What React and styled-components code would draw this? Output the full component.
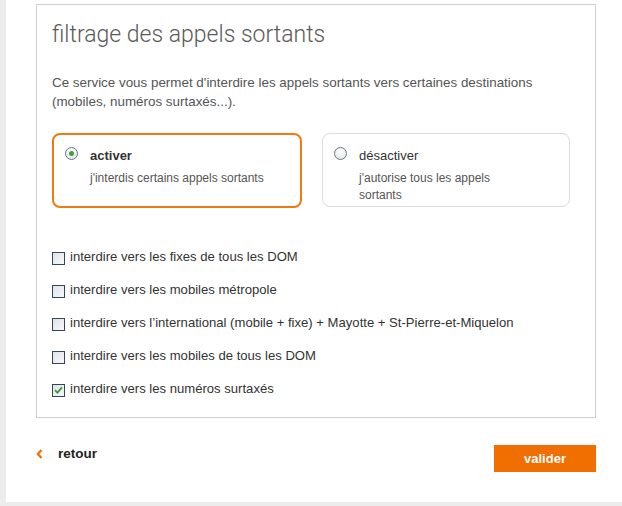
import React, { useState } from "react";
import styled, { createGlobalStyle } from "styled-components";

const GlobalStyle = createGlobalStyle`
  html, body {
    margin: 0;
    padding: 0;
    background: #ececec;
    font-family: "Liberation Sans", Arial, sans-serif;
  }
`;

const Panel = styled.div`
  margin-left: 6px;
  background: #fff;
  height: 502px;
  padding: 4px 26px 0 30px;
  box-sizing: border-box;
`;

const Box = styled.div`
  border: 1px solid #cfcfcf;
  height: 414px;
  box-sizing: border-box;
  padding: 14px 15px 0 15px;
`;

const Title = styled.h1`
  margin: 0;
  font-family: Roboto, "Liberation Sans", sans-serif;
  font-weight: 300;
  font-size: 23px;
  line-height: 32px;
  color: #5a5a5a;
`;

const Intro = styled.p`
  margin: 22px 0 0;
  font-size: 13.4px;
  line-height: 19px;
  color: #555;
`;

const Choices = styled.div`
  display: flex;
  gap: 20px;
  margin-top: 22px;
`;

const Card = styled.label`
  box-sizing: border-box;
  width: ${(p) => p.$w}px;
  height: ${(p) => (p.$on ? 75 : 74)}px;
  border: ${(p) => (p.$on ? "2px solid #ee7a12" : "1px solid #dcdcdc")};
  border-radius: 8px;
  padding: ${(p) => (p.$on ? "11px 0 0 11px" : "12px 0 0 11px")};
  display: flex;
  gap: 12px;
  cursor: pointer;
`;

const Radio = styled.span`
  flex: none;
  width: 11px;
  height: 11px;
  margin-top: 1px;
  border-radius: 50%;
  border: 1px solid #6d7784;
  background: radial-gradient(circle at 50% 35%, #fff 0%, #e6ebf0 70%, #cfd6de 100%);
  position: relative;
  &::after {
    content: "";
    display: ${(p) => (p.$on ? "block" : "none")};
    position: absolute;
    left: 3px;
    top: 3px;
    width: 5px;
    height: 5px;
    border-radius: 50%;
    background: #3fa23a;
  }
`;

const CardText = styled.div`
  display: flex;
  flex-direction: column;
  padding-top: 2px;
`;

const CardTitle = styled.span`
  font-size: 13px;
  line-height: 16px;
  font-weight: ${(p) => (p.$on ? "bold" : "normal")};
  color: #333;
`;

const CardSub = styled.span`
  margin-top: 6px;
  font-size: 12px;
  line-height: 17px;
  color: #555;
  max-width: ${(p) => p.$max || "none"};
`;

const Options = styled.div`
  display: flex;
  flex-direction: column;
  gap: 16px;
  margin-top: 40px;
`;

const Option = styled.label`
  display: flex;
  align-items: center;
  gap: 5px;
  height: 17px;
  font-size: 13.1px;
  color: #333;
  cursor: pointer;
`;

const Check = styled.span`
  flex: none;
  width: 11px;
  height: 11px;
  border: 1px solid #34465a;
  background: linear-gradient(135deg, #dfe3e8 0%, #f7f8fa 100%);
  display: flex;
  align-items: center;
  justify-content: center;
  margin-top: 3px;
`;

const Footer = styled.div`
  display: flex;
  justify-content: space-between;
  align-items: flex-start;
  margin-top: 27px;
`;

const Back = styled.a`
  display: flex;
  align-items: center;
  gap: 15px;
  margin-top: 1px;
  font-family: "Liberation Sans Narrow", "Liberation Sans", sans-serif;
  font-weight: bold;
  font-size: 13.5px;
  color: #222;
  text-decoration: none;
  cursor: pointer;
`;

const Submit = styled.button`
  width: 102px;
  height: 27px;
  border: none;
  background: #f16e00;
  color: #fff;
  font-family: "Liberation Sans", Arial, sans-serif;
  font-weight: bold;
  font-size: 13px;
  cursor: pointer;
`;

const options = [
  { label: "interdire vers les fixes de tous les DOM", checked: false },
  { label: "interdire vers les mobiles métropole", checked: false },
  { label: "interdire vers l\u2019international (mobile + fixe) + Mayotte + St-Pierre-et-Miquelon", checked: false },
  { label: "interdire vers les mobiles de tous les DOM", checked: false },
  { label: "interdire vers les numéros surtaxés", checked: true },
];

function CheckMark() {
  return (
    <svg width="9" height="8" viewBox="0 0 9 8">
      <path d="M1 4.2 L3.4 6.6 L8 1.4" fill="none" stroke="#3a9b32" strokeWidth="1.8" />
    </svg>
  );
}

export default function App() {
  const [active, setActive] = useState(true);
  const [checks, setChecks] = useState(options.map((o) => o.checked));

  const toggle = (i) => setChecks((c) => c.map((v, j) => (j === i ? !v : v)));

  return (
    <>
      <GlobalStyle />
      <Panel>
        <Box>
          <Title>filtrage des appels sortants</Title>
          <Intro>
            Ce service vous permet d'interdire les appels sortants vers certaines destinations
            <br />
            (mobiles, numéros surtaxés...).
          </Intro>

          <Choices>
            <Card $w={250} $on={active} onClick={() => setActive(true)}>
              <Radio $on={active} />
              <CardText>
                <CardTitle $on={active}>activer</CardTitle>
                <CardSub>j'interdis certains appels sortants</CardSub>
              </CardText>
            </Card>
            <Card $w={248} $on={!active} onClick={() => setActive(false)}>
              <Radio $on={!active} />
              <CardText>
                <CardTitle $on={!active}>désactiver</CardTitle>
                <CardSub $max="150px">j'autorise tous les appels sortants</CardSub>
              </CardText>
            </Card>
          </Choices>

          <Options>
            {options.map((o, i) => (
              <Option key={o.label} onClick={() => toggle(i)}>
                <Check>{checks[i] && <CheckMark />}</Check>
                {o.label}
              </Option>
            ))}
          </Options>
        </Box>

        <Footer>
          <Back>
            <svg width="7" height="10" viewBox="0 0 7 10">
              <path d="M5.5 1 L1.8 5 L5.5 9" fill="none" stroke="#f16e00" strokeWidth="2.2" />
            </svg>
            retour
          </Back>
          <Submit>valider</Submit>
        </Footer>
      </Panel>
    </>
  );
}
